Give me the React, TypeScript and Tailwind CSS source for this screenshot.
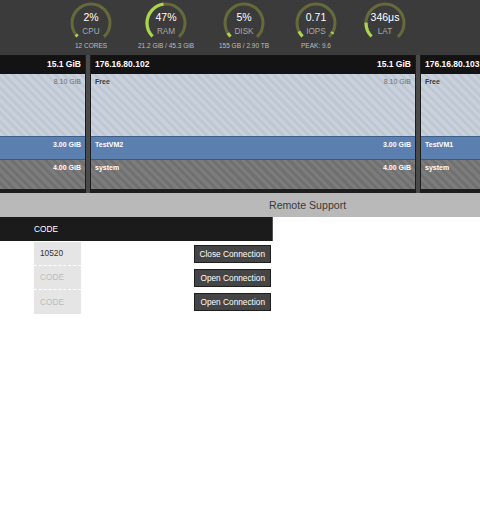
import React from "react";

type GaugeProps = {
  pct: number;
  value: string;
  label: string;
  sub?: string;
  width: string;
  peak?: number;
};

const R = 19;
const C = 2 * Math.PI * R;
const ARC = C * 0.75;

function Gauge({ pct, value, label, sub, width, peak }: GaugeProps) {
  return (
    <div className={`flex flex-col items-center shrink-0 ${width}`}>
      <div className="relative w-[44px] h-[44px] mt-[1px]">
        <svg width="44" height="44" viewBox="0 0 44 44">
          <circle
            cx="22"
            cy="22"
            r={R}
            fill="none"
            stroke="#666a3b"
            strokeWidth="3"
            strokeDasharray={`${ARC} ${C}`}
            transform="rotate(135 22 22)"
          />
          <circle
            cx="22"
            cy="22"
            r={R}
            fill="none"
            stroke="#aad44e"
            strokeWidth="3.2"
            strokeDasharray={`${ARC * pct} ${C}`}
            transform="rotate(135 22 22)"
          />
          {peak !== undefined && (
            <circle
              cx="22"
              cy="22"
              r={R}
              fill="none"
              stroke="#aad44e"
              strokeWidth="3.2"
              strokeDasharray={`2 ${C}`}
              strokeDashoffset={-ARC * peak}
              transform="rotate(135 22 22)"
            />
          )}
        </svg>
        <div className="absolute left-[-10px] right-[-10px] top-[10px] text-center text-[10.5px] leading-[12px] text-white">
          {value}
        </div>
        <div className="absolute left-[-10px] right-[-10px] top-[26px] text-center text-[8.2px] leading-[10px] text-[#a8a8a8]">
          {label}
        </div>
      </div>
      {sub && (
        <div className="-mt-[3px] whitespace-nowrap text-[6.5px] leading-[8px] text-[#bdbdbd]">
          {sub}
        </div>
      )}
    </div>
  );
}

type NodeInfo = { ip: string; vm: string };

const nodes: NodeInfo[] = [
  { ip: "176.16.80.101", vm: "TestVM3" },
  { ip: "176.16.80.102", vm: "TestVM2" },
  { ip: "176.16.80.103", vm: "TestVM1" },
];

type Clip = "left" | "right" | undefined;

// nodes at the edges are scrolled partly out of view
function NodeColumn({ node, clip }: { node: NodeInfo; clip?: Clip }) {
  const showLeft = clip !== "left";
  const showRight = clip !== "right";
  const rowCls = clip === "left" ? "justify-end" : "justify-between";
  const widthCls =
    clip === "left"
      ? "w-[86px] border-l-0"
      : clip === "right"
        ? "w-[60px] border-r-0"
        : "w-[326px]";
  return (
    <div className={`flex flex-col shrink-0 border-x border-[#1c1c1c] ${widthCls}`}>
      <div className={`flex items-center ${rowCls} h-[19px] px-[4px] bg-[#131313] text-[8.5px] font-bold text-white whitespace-nowrap`}>
        {showLeft && <span>{node.ip}</span>}
        {showRight && <span>15.1 GiB</span>}
      </div>
      <div className={`flex ${rowCls} h-[62px] px-[4px] pt-[3px] text-[7px] leading-[9px] bg-[repeating-linear-gradient(45deg,#c9d1dc_0px,#c9d1dc_3px,#bfc7d2_3px,#bfc7d2_6px)]`}>
        {showLeft && <span className="font-bold text-[#3a3a3a]">Free</span>}
        {showRight && <span className="text-[#6f6f6f]">8.10 GiB</span>}
      </div>
      <div className={`flex ${rowCls} h-[23px] px-[4px] pt-[3px] text-[7px] leading-[9px] font-bold text-white bg-[#5b80b0] border-t border-[#3e5f8a]`}>
        {showLeft && <span>{node.vm}</span>}
        {showRight && <span>3.00 GiB</span>}
      </div>
      <div className={`flex ${rowCls} h-[30px] px-[4px] pt-[3px] text-[7px] leading-[9px] font-bold text-white border-t border-[#555555] bg-[repeating-linear-gradient(45deg,#7c7c7c_0px,#7c7c7c_3px,#707070_3px,#707070_6px)]`}>
        {showLeft && <span>system</span>}
        {showRight && <span>4.00 GiB</span>}
      </div>
      <div className="h-[4px] bg-[#1e1e1e]" />
    </div>
  );
}

const rows = [
  { code: "10520", action: "Close Connection" },
  { code: "", action: "Open Connection" },
  { code: "", action: "Open Connection" },
];

export default function App() {
  return (
    <div className="w-[480px] h-[528px] overflow-hidden bg-white font-['Liberation_Sans',Arial,sans-serif]">
      <div className="flex h-[55px] gap-[25px] pl-[69px] bg-[#3b3b3b]">
        <Gauge pct={0.03} value="2%" label="CPU" sub="12 CORES" width="w-[44px]" />
        <Gauge pct={0.47} value="47%" label="RAM" sub="21.2 GiB / 45.3 GiB" width="w-[56px]" />
        <Gauge pct={0.05} value="5%" label="DISK" sub="155 GB / 2.90 TB" width="w-[50px]" />
        <Gauge pct={0.07} value="0.71" label="IOPS" sub="PEAK: 9.6" width="w-[44px]" peak={0.93} />
        <Gauge pct={0.17} value="346μs" label="LAT" width="w-[44px]" />
      </div>

      <div className="flex h-[138px] gap-[4px] overflow-hidden bg-[#4a4a4a]">
        {nodes.map((n, i) => (
          <NodeColumn
            key={n.ip}
            node={n}
            clip={i === 0 ? "left" : i === nodes.length - 1 ? "right" : undefined}
          />
        ))}
      </div>

      <div className="flex items-center h-[24px] pl-[269px] pt-[1px] bg-[#b9b9b9] text-[10.6px] text-[#3a3a3a]">
        Remote Support
      </div>

      <div className="w-[273px]">
        <div className="flex items-center h-[24px] bg-[#1b1b1b] border-r border-[#555555] text-[8.3px] text-white">
          <span className="pl-[34px]">CODE</span>
        </div>
        <div className="pt-[1px]">
          {rows.map((r, i) => (
            <div key={i} className="flex items-center h-[24px]">
              <div className="w-[34px]" />
              <div
                className={`flex items-center w-[47px] h-[24px] pl-[6px] bg-[#e5e5e5] text-[8.3px] ${i < rows.length - 1 ? "border-b border-dashed border-white" : ""} ${r.code ? "text-[#333333]" : "text-[#bcbcbc]"}`}
              >
                {r.code || "CODE"}
              </div>
              <div className="flex flex-1 justify-end pr-[2px]">
                <button className="h-[18px] px-[5px] bg-[#454545] border border-[#1e1e1e] text-[8.3px] text-white leading-none">
                  {r.action}
                </button>
              </div>
            </div>
          ))}
        </div>
      </div>
    </div>
  );
}
